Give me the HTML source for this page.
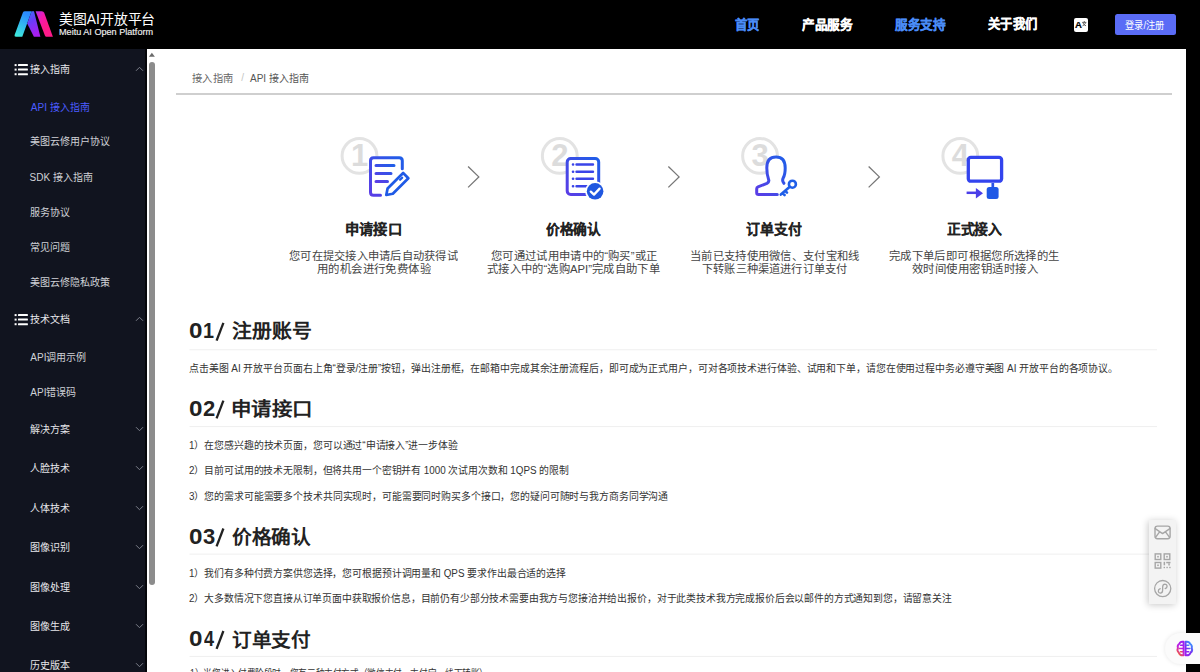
<!DOCTYPE html><html lang="zh-CN"><head><meta charset="utf-8"><style>
*{margin:0;padding:0;box-sizing:border-box}
html,body{width:1200px;height:672px;overflow:hidden;background:#000;font-family:"Liberation Sans",sans-serif}
.t{position:absolute;white-space:nowrap;line-height:1}
.abs{position:absolute}
</style></head><body>
<div class="abs" style="left:0;top:0;width:1200px;height:49px;background:#000"></div>
<div class="abs" style="left:0;top:49px;width:144.5px;height:623px;background:#11141f"></div>
<div class="abs" style="left:144.5px;top:49px;width:2px;height:623px;background:#05060a"></div>
<div class="abs" style="left:146.5px;top:49px;width:1039.5px;height:623px;background:#fff"></div>
<svg class="abs" style="left:0;top:0" width="1200" height="672" viewBox="0 0 1200 672"><path d="M148.9 56.7 L151.9 52.8 L154.9 56.7 Z" fill="#6b6b6b"/><rect x="149" y="62" width="6" height="523" rx="3" fill="#8c8c8c"/></svg>
<svg class="abs" style="left:0;top:0" width="60" height="49" viewBox="0 0 60 49">
<defs>
<linearGradient id="lg1" x1="0" y1="1" x2="0.4" y2="0"><stop offset="0" stop-color="#3ff0d8"/><stop offset="1" stop-color="#2a8cff"/></linearGradient>
<linearGradient id="lg2" x1="0" y1="0" x2="0.3" y2="1"><stop offset="0" stop-color="#3a70ff"/><stop offset="0.45" stop-color="#6a3cf8"/><stop offset="1" stop-color="#a81ef0"/></linearGradient>
<linearGradient id="lg3" x1="0" y1="0" x2="0.6" y2="0.6"><stop offset="0" stop-color="#a830f0"/><stop offset="0.5" stop-color="#f21ab0"/><stop offset="1" stop-color="#ff1a8a"/></linearGradient>
</defs>
<path d="M16 36.8 Q14 36.8 14.6 35 L22.9 12.6 Q23.4 11.2 25 11.2 L31.6 11.2 L22.3 36.8 Z" fill="url(#lg1)"/>
<path d="M27.2 23.6 L31.6 11.2 L34 11.2 L40.4 36.8 L33.9 36.8 Z" fill="url(#lg2)"/>
<path d="M35.6 11.2 L41.8 11.2 Q43.6 11.2 44.2 12.8 L52.9 36.8 L46.3 36.8 Q45.4 36.8 45 35.8 Z" fill="url(#lg3)"/>
</svg>
<div class="abs" style="left:1074.1px;top:18.1px;width:13.6px;height:13.6px;background:#fff;border-radius:2px"></div>
<svg class="abs" style="left:0;top:0" width="1200" height="40" viewBox="0 0 1200 40"><path d="M1082.2 22.4 L1086.3 22.4 M1084.25 21 L1084.25 22.4 M1082.9 22.8 Q1083.8 25.2 1086 25.8 M1085.6 22.8 Q1084.7 25.2 1082.5 25.8" stroke="#555" stroke-width="0.9" fill="none"/></svg>
<div class="abs" style="left:1115.1px;top:14px;width:60.8px;height:21px;background:#5a6cf6;border-radius:2.5px"></div>
<svg class="abs" style="left:13px;top:62.599999999999994px" width="16" height="14" viewBox="0 0 16 14"><rect x="1.6" y="1.1" width="2" height="2" fill="#fff"/><rect x="5" y="1.1" width="9.9" height="2" rx="0.5" fill="#fff"/><rect x="1.6" y="5.6" width="2" height="2" fill="#fff"/><rect x="5" y="5.6" width="9.9" height="2" rx="0.5" fill="#fff"/><rect x="1.6" y="10.2" width="2" height="2" fill="#fff"/><rect x="5" y="10.2" width="9.9" height="2" rx="0.5" fill="#fff"/></svg>
<svg class="abs" style="left:0;top:63.5px" width="150" height="10" viewBox="0 0 150 10"><path d="M136 6.8 L139.5 3.3 L143 6.8" stroke="#7c7f8a" stroke-width="1" fill="none"/></svg>
<svg class="abs" style="left:13px;top:312.8px" width="16" height="14" viewBox="0 0 16 14"><rect x="1.6" y="1.1" width="2" height="2" fill="#fff"/><rect x="5" y="1.1" width="9.9" height="2" rx="0.5" fill="#fff"/><rect x="1.6" y="5.6" width="2" height="2" fill="#fff"/><rect x="5" y="5.6" width="9.9" height="2" rx="0.5" fill="#fff"/><rect x="1.6" y="10.2" width="2" height="2" fill="#fff"/><rect x="5" y="10.2" width="9.9" height="2" rx="0.5" fill="#fff"/></svg>
<svg class="abs" style="left:0;top:313.5px" width="150" height="10" viewBox="0 0 150 10"><path d="M136 6.8 L139.5 3.3 L143 6.8" stroke="#7c7f8a" stroke-width="1" fill="none"/></svg>
<svg class="abs" style="left:0;top:423.95000000000005px" width="150" height="10" viewBox="0 0 150 10"><path d="M136 3.2 L139.5 6.7 L143 3.2" stroke="#7c7f8a" stroke-width="1" fill="none"/></svg>
<svg class="abs" style="left:0;top:463.45px" width="150" height="10" viewBox="0 0 150 10"><path d="M136 3.2 L139.5 6.7 L143 3.2" stroke="#7c7f8a" stroke-width="1" fill="none"/></svg>
<svg class="abs" style="left:0;top:502.5px" width="150" height="10" viewBox="0 0 150 10"><path d="M136 3.2 L139.5 6.7 L143 3.2" stroke="#7c7f8a" stroke-width="1" fill="none"/></svg>
<svg class="abs" style="left:0;top:541.85px" width="150" height="10" viewBox="0 0 150 10"><path d="M136 3.2 L139.5 6.7 L143 3.2" stroke="#7c7f8a" stroke-width="1" fill="none"/></svg>
<svg class="abs" style="left:0;top:581.65px" width="150" height="10" viewBox="0 0 150 10"><path d="M136 3.2 L139.5 6.7 L143 3.2" stroke="#7c7f8a" stroke-width="1" fill="none"/></svg>
<svg class="abs" style="left:0;top:620.6px" width="150" height="10" viewBox="0 0 150 10"><path d="M136 3.2 L139.5 6.7 L143 3.2" stroke="#7c7f8a" stroke-width="1" fill="none"/></svg>
<svg class="abs" style="left:0;top:659.9px" width="150" height="10" viewBox="0 0 150 10"><path d="M136 3.2 L139.5 6.7 L143 3.2" stroke="#7c7f8a" stroke-width="1" fill="none"/></svg>
<div class="abs" style="left:176px;top:92.8px;width:996px;height:2px;background:#cfcfcf"></div>
<svg class="abs" style="left:0;top:0" width="1200" height="672" viewBox="0 0 1200 672">
<defs>
<linearGradient id="ig" gradientUnits="objectBoundingBox" x1="0" y1="1" x2="1" y2="0"><stop offset="0" stop-color="#5a3de6"/><stop offset="1" stop-color="#1f5ee8"/></linearGradient>
</defs>
<circle cx="359.5" cy="155.9" r="17.4" stroke="#e3e3e3" stroke-width="3" fill="none"/>
<text x="359.5" y="165.6" text-anchor="middle" font-family="Liberation Sans" font-weight="bold" font-size="31" fill="#dcdcdc">1</text>
<circle cx="559.77" cy="155.9" r="17.4" stroke="#e3e3e3" stroke-width="3" fill="none"/>
<text x="559.77" y="165.6" text-anchor="middle" font-family="Liberation Sans" font-weight="bold" font-size="31" fill="#dcdcdc">2</text>
<circle cx="760.04" cy="155.9" r="17.4" stroke="#e3e3e3" stroke-width="3" fill="none"/>
<text x="760.04" y="165.6" text-anchor="middle" font-family="Liberation Sans" font-weight="bold" font-size="31" fill="#dcdcdc">3</text>
<circle cx="960.3100000000001" cy="155.9" r="17.4" stroke="#e3e3e3" stroke-width="3" fill="none"/>
<text x="960.3100000000001" y="165.6" text-anchor="middle" font-family="Liberation Sans" font-weight="bold" font-size="31" fill="#dcdcdc">4</text>
<path d="M468.1 166.5 L478.8 176.9 L468.1 187.4" stroke="#777" stroke-width="1.3" fill="none"/>
<path d="M668.37 166.5 L679.07 176.9 L668.37 187.4" stroke="#777" stroke-width="1.3" fill="none"/>
<path d="M868.6400000000001 166.5 L879.3400000000001 176.9 L868.6400000000001 187.4" stroke="#777" stroke-width="1.3" fill="none"/>
<g stroke="url(#ig)" stroke-width="3" fill="#fff" stroke-linecap="round" stroke-linejoin="round">
<path d="M380.5 195.2 L373.5 195.2 Q370.5 195.2 370.5 192.2 L370.5 160.7 Q370.5 157.7 373.5 157.7 L399.3 157.7 Q402.3 157.7 402.3 160.7 L402.3 168.8"/>
</g>
<g stroke="url(#ig)" stroke-width="3" fill="none" stroke-linecap="round">
<path d="M376 165.4 L394 165.4 M376 173.5 L391 173.5 M376 181.4 L387.5 181.4"/>
</g>
<g transform="translate(386.3,195) rotate(-45)" stroke="#1f5ae6" stroke-width="2.7" fill="#fff" stroke-linejoin="round" stroke-linecap="round">
<path d="M0 0 L5.5 -3.7 L27.5 -3.7 L27.5 3.7 L5.5 3.7 Z"/><path d="M20.5 -1 L23.5 -1" stroke-width="2.2"/>
</g>
<g stroke="url(#ig)" stroke-width="3" fill="#fff" stroke-linecap="round">
<rect x="567.2" y="158.6" width="31.5" height="35.9" rx="3.5"/>
</g>
<g stroke="#3a44e8" stroke-width="2.4" stroke-linecap="round">
<path d="M576.5 164.5 L593 164.5 M576.5 171.7 L593 171.7 M576.5 178.8 L593 178.8 M576.5 186.2 L588 186.2"/>
<path d="M573 164.5 L573.1 164.5 M573 171.7 L573.1 171.7 M573 178.8 L573.1 178.8 M573 186.2 L573.1 186.2" stroke-width="2.6"/>
</g>
<circle cx="595.1" cy="191.3" r="10" fill="#fff"/>
<circle cx="595.1" cy="191.3" r="8.3" fill="#2057e0"/>
<path d="M590.8 191.6 L594 194.6 L599.6 188.6" stroke="#fff" stroke-width="2.3" fill="none" stroke-linecap="round" stroke-linejoin="round"/>
<path d="M777.3 194.6 L758.5 194.6 Q756.7 194.6 756.7 192.8 L756.7 188.8 Q756.7 187.4 758 186.9 L767 183.3 Q769.5 182 768.6 179.5 Q766.8 174.5 766.8 168 Q766.8 157.1 776 157.1 Q785.2 157.1 785.2 168 Q785.2 174.5 783.2 178 Q781.8 180.8 783.9 183.3 L784 194.6 Z" fill="#fff"/>
<g stroke="url(#ig)" stroke-width="3" fill="none" stroke-linecap="round" stroke-linejoin="round">
<path d="M777.3 194.6 L758.5 194.6 Q756.7 194.6 756.7 192.8 L756.7 188.8 Q756.7 187.4 758 186.9 L767 183.3 Q769.5 182 768.6 179.5 Q766.8 174.5 766.8 168 Q766.8 157.1 776 157.1 Q785.2 157.1 785.2 168 Q785.2 174.5 783.2 178 Q781.8 180.8 783.9 183.3"/>
</g>
<g stroke="#1f5ee8" stroke-width="2.6" fill="none" stroke-linecap="round">
<circle cx="792.4" cy="184.2" r="3.5"/>
<path d="M789.8 186.8 L780.8 194.6 M782.6 193 L784.6 195 M785.2 190.8 L787 192.6"/>
</g>
<g stroke-linejoin="round">
<rect x="968.3" y="157.4" width="33.3" height="23.8" rx="2.5" stroke="#3344ee" stroke-width="3.3" fill="#fff"/>
<path d="M992.8 183 L992.8 187.5" stroke="#2a52e6" stroke-width="2.7"/>
</g>
<rect x="986.7" y="187" width="11.9" height="12" rx="2.5" fill="#1f58e6"/>
<path d="M966.6 192.8 L977.5 192.8" stroke="#4a3ee8" stroke-width="2.5"/>
<path d="M975.9 188.1 L983 193.2 L975.9 198.5 Z" fill="#4a3ee8"/>

<rect x="189.5" y="349.25" width="967.5" height="1" fill="#efefef"/>
<rect x="189.5" y="426.1" width="967.5" height="1" fill="#efefef"/>
<rect x="189.5" y="553.6" width="967.5" height="1" fill="#efefef"/>
<rect x="189.5" y="655.9" width="967.5" height="1" fill="#efefef"/>
</svg>
<svg class="abs" style="left:0;top:0" width="1200" height="672" viewBox="0 0 1200 672"><path d="M216.6 340.7 L223.4 322.9" stroke="#222" stroke-width="2.3"/></svg>
<svg class="abs" style="left:0;top:0" width="1200" height="672" viewBox="0 0 1200 672"><path d="M216.6 418.4 L223.4 400.59999999999997" stroke="#222" stroke-width="2.3"/></svg>
<svg class="abs" style="left:0;top:0" width="1200" height="672" viewBox="0 0 1200 672"><path d="M216.6 546.3000000000001 L223.4 528.5" stroke="#222" stroke-width="2.3"/></svg>
<svg class="abs" style="left:0;top:0" width="1200" height="672" viewBox="0 0 1200 672"><path d="M216.6 648.8000000000001 L223.4 631.0" stroke="#222" stroke-width="2.3"/></svg>
<div class="t" style="left:59.01px;top:11.75px;font-size:14px;color:#fff;transform:scale(0.9895,1.0000);transform-origin:0 0;">美图AI开放平台</div>
<div class="t" style="left:58.79px;top:27.85px;font-size:9px;color:#f0f0f0;-webkit-text-stroke:0.15px #f0f0f0;transform:scale(1.0109,1.0000);transform-origin:0 0;">Meitu AI Open Platform</div>
<div class="t" style="left:735.00px;top:17.65px;font-size:13px;color:#4a8cf7;font-weight:bold;-webkit-text-stroke:0.25px #4a8cf7;transform:scale(0.9500,1.0000);transform-origin:0 0;">首页</div>
<div class="t" style="left:802.00px;top:18.15px;font-size:13px;color:#fff;font-weight:bold;-webkit-text-stroke:0.25px #fff;transform:scale(0.9750,1.0000);transform-origin:0 0;">产品服务</div>
<div class="t" style="left:895.00px;top:18.15px;font-size:13px;color:#4a8cf7;font-weight:bold;-webkit-text-stroke:0.25px #4a8cf7;transform:scale(0.9731,1.0000);transform-origin:0 0;">服务支持</div>
<div class="t" style="left:988.00px;top:17.15px;font-size:13px;color:#fff;font-weight:bold;-webkit-text-stroke:0.25px #fff;transform:scale(0.9481,1.0000);transform-origin:0 0;">关于我们</div>
<div class="t" style="left:1075.40px;top:21.30px;font-size:9px;color:#000;font-weight:bold;-webkit-text-stroke:0.2px #000;transform:scale(1.0667,1.0000);transform-origin:0 0;">A</div>
<div class="t" style="left:1125.08px;top:20.60px;font-size:10px;color:#fff;transform:scale(0.9238,1.0000);transform-origin:0 0;">登录/注册</div>
<div class="t" style="left:29.60px;top:64.75px;font-size:10px;color:#e6e6ea;">接入指南</div>
<div class="t" style="left:30.80px;top:102.75px;font-size:10px;color:#4b5cff;">API 接入指南</div>
<div class="t" style="left:29.60px;top:137.00px;font-size:10px;color:#cfd1d6;">美图云修用户协议</div>
<div class="t" style="left:29.60px;top:172.55px;font-size:10px;color:#cfd1d6;">SDK 接入指南</div>
<div class="t" style="left:29.50px;top:208.30px;font-size:10px;color:#cfd1d6;">服务协议</div>
<div class="t" style="left:30.00px;top:243.40px;font-size:10px;color:#cfd1d6;">常见问题</div>
<div class="t" style="left:29.50px;top:278.05px;font-size:10px;color:#cfd1d6;">美图云修隐私政策</div>
<div class="t" style="left:29.80px;top:315.30px;font-size:10px;color:#e6e6ea;">技术文档</div>
<div class="t" style="left:30.30px;top:352.70px;font-size:10px;color:#cfd1d6;">API调用示例</div>
<div class="t" style="left:30.30px;top:387.60px;font-size:10px;color:#cfd1d6;">API错误码</div>
<div class="t" style="left:29.70px;top:424.95px;font-size:10px;color:#e6e6ea;">解决方案</div>
<div class="t" style="left:29.70px;top:464.45px;font-size:10px;color:#e6e6ea;">人脸技术</div>
<div class="t" style="left:29.70px;top:503.50px;font-size:10px;color:#e6e6ea;">人体技术</div>
<div class="t" style="left:29.70px;top:542.85px;font-size:10px;color:#e6e6ea;">图像识别</div>
<div class="t" style="left:29.70px;top:582.65px;font-size:10px;color:#e6e6ea;">图像处理</div>
<div class="t" style="left:29.70px;top:621.60px;font-size:10px;color:#e6e6ea;">图像生成</div>
<div class="t" style="left:29.70px;top:660.90px;font-size:10px;color:#e6e6ea;">历史版本</div>
<div class="t" style="left:191.87px;top:73.65px;font-size:10px;color:#666;transform:scale(1.0289,1.0000);transform-origin:0 0;">接入指南</div>
<div class="t" style="left:241.30px;top:73.30px;font-size:10px;color:#c4c4c4;">/</div>
<div class="t" style="left:250.00px;top:73.65px;font-size:10px;color:#555;">API 接入指南</div>
<div class="t" style="left:344.68px;top:222.25px;font-size:14px;color:#222;font-weight:bold;-webkit-text-stroke:0.08px #222;transform:scale(1.0167,1.0000);transform-origin:0 0;">申请接口</div>
<div class="t" style="left:288.78px;top:251.25px;font-size:11px;color:#444;transform:scale(1.0232,1.0000);transform-origin:0 0;">您可在提交接入申请后自动获得试</div>
<div class="t" style="left:316.66px;top:264.05px;font-size:11px;color:#444;transform:scale(1.0361,1.0000);transform-origin:0 0;">用的机会进行免费体验</div>
<div class="t" style="left:546.20px;top:222.25px;font-size:14px;color:#222;font-weight:bold;-webkit-text-stroke:0.08px #222;transform:scale(0.9804,1.0000);transform-origin:0 0;">价格确认</div>
<div class="t" style="left:490.87px;top:251.25px;font-size:11px;color:#444;transform:scale(1.0302,1.0000);transform-origin:0 0;">您可通过试用申请中的“购买”或正</div>
<div class="t" style="left:487.17px;top:264.05px;font-size:11px;color:#444;transform:scale(1.0283,1.0000);transform-origin:0 0;">式接入中的“选购API”完成自助下单</div>
<div class="t" style="left:746.00px;top:222.25px;font-size:14px;color:#222;font-weight:bold;-webkit-text-stroke:0.08px #222;transform:scale(0.9946,1.0000);transform-origin:0 0;">订单支付</div>
<div class="t" style="left:689.67px;top:251.25px;font-size:11px;color:#444;transform:scale(1.0282,1.0000);transform-origin:0 0;">当前已支持使用微信、支付宝和线</div>
<div class="t" style="left:701.68px;top:264.05px;font-size:11px;color:#444;transform:scale(1.0163,1.0000);transform-origin:0 0;">下转账三种渠道进行订单支付</div>
<div class="t" style="left:946.70px;top:222.25px;font-size:14px;color:#222;font-weight:bold;-webkit-text-stroke:0.08px #222;transform:scale(0.9821,1.0000);transform-origin:0 0;">正式接入</div>
<div class="t" style="left:888.97px;top:251.25px;font-size:11px;color:#444;transform:scale(1.0325,1.0000);transform-origin:0 0;">完成下单后即可根据您所选择的生</div>
<div class="t" style="left:911.66px;top:264.05px;font-size:11px;color:#444;transform:scale(1.0420,1.0000);transform-origin:0 0;">效时间使用密钥适时接入</div>
<div class="t" style="left:189.19px;top:318.95px;font-size:20px;color:#222;font-weight:bold;transform:scale(1.2111,1.1000);transform-origin:0 0;">0</div>
<div class="t" style="left:202.81px;top:318.95px;font-size:20px;color:#222;font-weight:bold;transform:scale(0.9900,1.1000);transform-origin:0 0;">1</div>
<div class="t" style="left:231.65px;top:322.45px;font-size:19px;color:#222;font-weight:bold;transform:scale(1.0459,1.0000);transform-origin:0 0;">注册账号</div>
<div class="t" style="left:189.31px;top:364.12px;font-size:10px;color:#333;transform:scale(0.9889,1.0000);transform-origin:0 0;">点击美图 AI 开放平台页面右上角“登录/注册”按钮，弹出注册框，在邮箱中完成其余注册流程后，即可成为正式用户，可对各项技术进行体验、试用和下单，请您在使用过程中务必遵守美图 AI 开放平台的各项协议。</div>
<div class="t" style="left:189.19px;top:396.65px;font-size:20px;color:#222;font-weight:bold;transform:scale(1.2111,1.1000);transform-origin:0 0;">0</div>
<div class="t" style="left:202.70px;top:396.65px;font-size:20px;color:#222;font-weight:bold;transform:scale(1.1000,1.1000);transform-origin:0 0;">2</div>
<div class="t" style="left:230.55px;top:400.15px;font-size:19px;color:#222;font-weight:bold;transform:scale(1.0750,1.0000);transform-origin:0 0;">申请接口</div>
<div class="t" style="left:189.41px;top:440.80px;font-size:10px;color:#333;transform:scale(0.9875,1.0000);transform-origin:0 0;">1）在您感兴趣的技术页面，您可以通过“申请接入”进一步体验</div>
<div class="t" style="left:189.41px;top:465.75px;font-size:10px;color:#333;transform:scale(0.9853,1.0000);transform-origin:0 0;">2）目前可试用的技术无限制，但将共用一个密钥并有 1000 次试用次数和 1QPS 的限制</div>
<div class="t" style="left:189.41px;top:491.70px;font-size:10px;color:#333;transform:scale(0.9868,1.0000);transform-origin:0 0;">3）您的需求可能需要多个技术共同实现时，可能需要同时购买多个接口，您的疑问可随时与我方商务同学沟通</div>
<div class="t" style="left:189.19px;top:524.55px;font-size:20px;color:#222;font-weight:bold;transform:scale(1.2111,1.1000);transform-origin:0 0;">0</div>
<div class="t" style="left:202.70px;top:524.55px;font-size:20px;color:#222;font-weight:bold;transform:scale(1.1000,1.1000);transform-origin:0 0;">3</div>
<div class="t" style="left:231.67px;top:528.05px;font-size:19px;color:#222;font-weight:bold;transform:scale(1.0320,1.0000);transform-origin:0 0;">价格确认</div>
<div class="t" style="left:189.41px;top:568.70px;font-size:10px;color:#333;transform:scale(0.9858,1.0000);transform-origin:0 0;">1）我们有多种付费方案供您选择，您可根据预计调用量和 QPS 要求作出最合适的选择</div>
<div class="t" style="left:189.42px;top:594.00px;font-size:10px;color:#333;transform:scale(0.9834,1.0000);transform-origin:0 0;">2）大多数情况下您直接从订单页面中获取报价信息，目前仍有少部分技术需要由我方与您接洽并给出报价，对于此类技术我方完成报价后会以邮件的方式通知到您，请留意关注</div>
<div class="t" style="left:189.19px;top:627.05px;font-size:20px;color:#222;font-weight:bold;transform:scale(1.2111,1.1000);transform-origin:0 0;">0</div>
<div class="t" style="left:203.80px;top:627.05px;font-size:20px;color:#222;font-weight:bold;transform:scale(0.9000,1.1000);transform-origin:0 0;">4</div>
<div class="t" style="left:231.67px;top:630.55px;font-size:19px;color:#222;font-weight:bold;transform:scale(1.0320,1.0000);transform-origin:0 0;">订单支付</div>
<div class="t" style="left:189.54px;top:669.30px;font-size:10px;color:#333;transform:scale(0.8627,1.0000);transform-origin:0 0;">1）当您进入付费阶段时，您有三种支付方式（微信支付、支付宝、线下转账）</div>
<div class="abs" style="left:1149.3px;top:519.7px;width:26.5px;height:84.8px;background:#f3f3f3;box-shadow:-1px 1px 7px rgba(0,0,0,0.22)"></div>
<svg class="abs" style="left:0;top:0" width="1200" height="672" viewBox="0 0 1200 672">
<g stroke="#a6a6a6" stroke-width="1.4" fill="none" stroke-linecap="round" stroke-linejoin="round">
<rect x="1155" y="526.1" width="15.1" height="12.6" rx="2.4"/>
<path d="M1155.2 528.6 L1162.55 533.6 L1169.9 528.6 M1155.5 537.3 L1159.6 531.8 M1169.6 537.3 L1165.5 531.8"/>
</g>
<g stroke="#a6a6a6" stroke-width="1.4" fill="none">
<rect x="1155.2" y="553.9" width="5.6" height="5.6"/><rect x="1164.2" y="553.9" width="5.6" height="5.6"/><rect x="1155.2" y="562.5" width="5.6" height="5.6"/>
</g>
<g fill="#a6a6a6">
<rect x="1157.2" y="555.9" width="1.6" height="1.6"/><rect x="1166.2" y="555.9" width="1.6" height="1.6"/><rect x="1157.2" y="564.5" width="1.6" height="1.6"/>
<rect x="1163.6" y="561.8" width="1.5" height="3.5"/><rect x="1166.2" y="561.8" width="4.3" height="1.5"/><rect x="1168.3" y="563.3" width="1.5" height="2.2"/><rect x="1163.6" y="566.8" width="1.4" height="1.4"/><rect x="1166.4" y="566.8" width="1.4" height="1.4"/><rect x="1169.2" y="566.8" width="1.4" height="1.4"/>
</g>
<circle cx="1162.7" cy="588.6" r="8.1" stroke="#a6a6a6" stroke-width="1.3" fill="none"/>
<path d="M1160.2 588.6 Q1158.2 589.3 1158.3 591.2 Q1158.5 593.2 1160.4 593.1 Q1162.5 592.9 1162.6 590.6 L1162.7 586.6 Q1162.9 584.2 1165 584.1 Q1167 584.2 1167.1 586.1 Q1167 587.9 1165.2 588.6" stroke="#a6a6a6" stroke-width="1.3" fill="none" stroke-linecap="round"/>
</svg>
<div class="abs" style="left:1186px;top:49px;width:14px;height:623px;background:#000"></div>
<div class="abs" style="left:1164.8px;top:632.8px;width:60px;height:31px;background:#fbfbfb;border-radius:16px;box-shadow:0 0 4px rgba(0,0,0,0.10)"></div>
<svg class="abs" style="left:0;top:0" width="1200" height="672" viewBox="0 0 1200 672">
<defs>
<linearGradient id="bl" x1="0" y1="1" x2="0.5" y2="0"><stop offset="0" stop-color="#ff6a12"/><stop offset="0.55" stop-color="#c21ee0"/><stop offset="1" stop-color="#a01ef0"/></linearGradient>
<linearGradient id="br" x1="0" y1="1" x2="0.6" y2="0"><stop offset="0" stop-color="#9a1ef0"/><stop offset="0.5" stop-color="#7a30f0"/><stop offset="1" stop-color="#3a8cff"/></linearGradient>
</defs>
<g fill="none" stroke-width="1.9" stroke-linecap="round" stroke-linejoin="round">
<path d="M1183.6 641.8 Q1180.2 641.2 1179.4 643.8 Q1177 645.2 1177.9 648 Q1176.6 650.8 1178.9 652.8 Q1180 655.8 1183.6 655.2 Z" stroke="url(#bl)"/>
<path d="M1185.6 641.8 Q1189.2 641.2 1190 643.8 Q1192.4 645.2 1191.8 648 Q1193 650.8 1190.5 652.8 Q1189.4 655.8 1185.6 655.2 Z" stroke="url(#br)"/>
<path d="M1180.5 645.2 L1182.8 645.2 M1179.4 648.5 L1182.8 648.5 M1180.5 651.8 L1182.8 651.8" stroke="url(#bl)" stroke-width="1.4"/>
<path d="M1186.6 645.2 L1188.8 645.2 M1186.6 648.5 L1190 648.5 M1186.6 651.8 L1188.8 651.8" stroke="url(#br)" stroke-width="1.4"/>
</g>
</svg>

</body></html>
